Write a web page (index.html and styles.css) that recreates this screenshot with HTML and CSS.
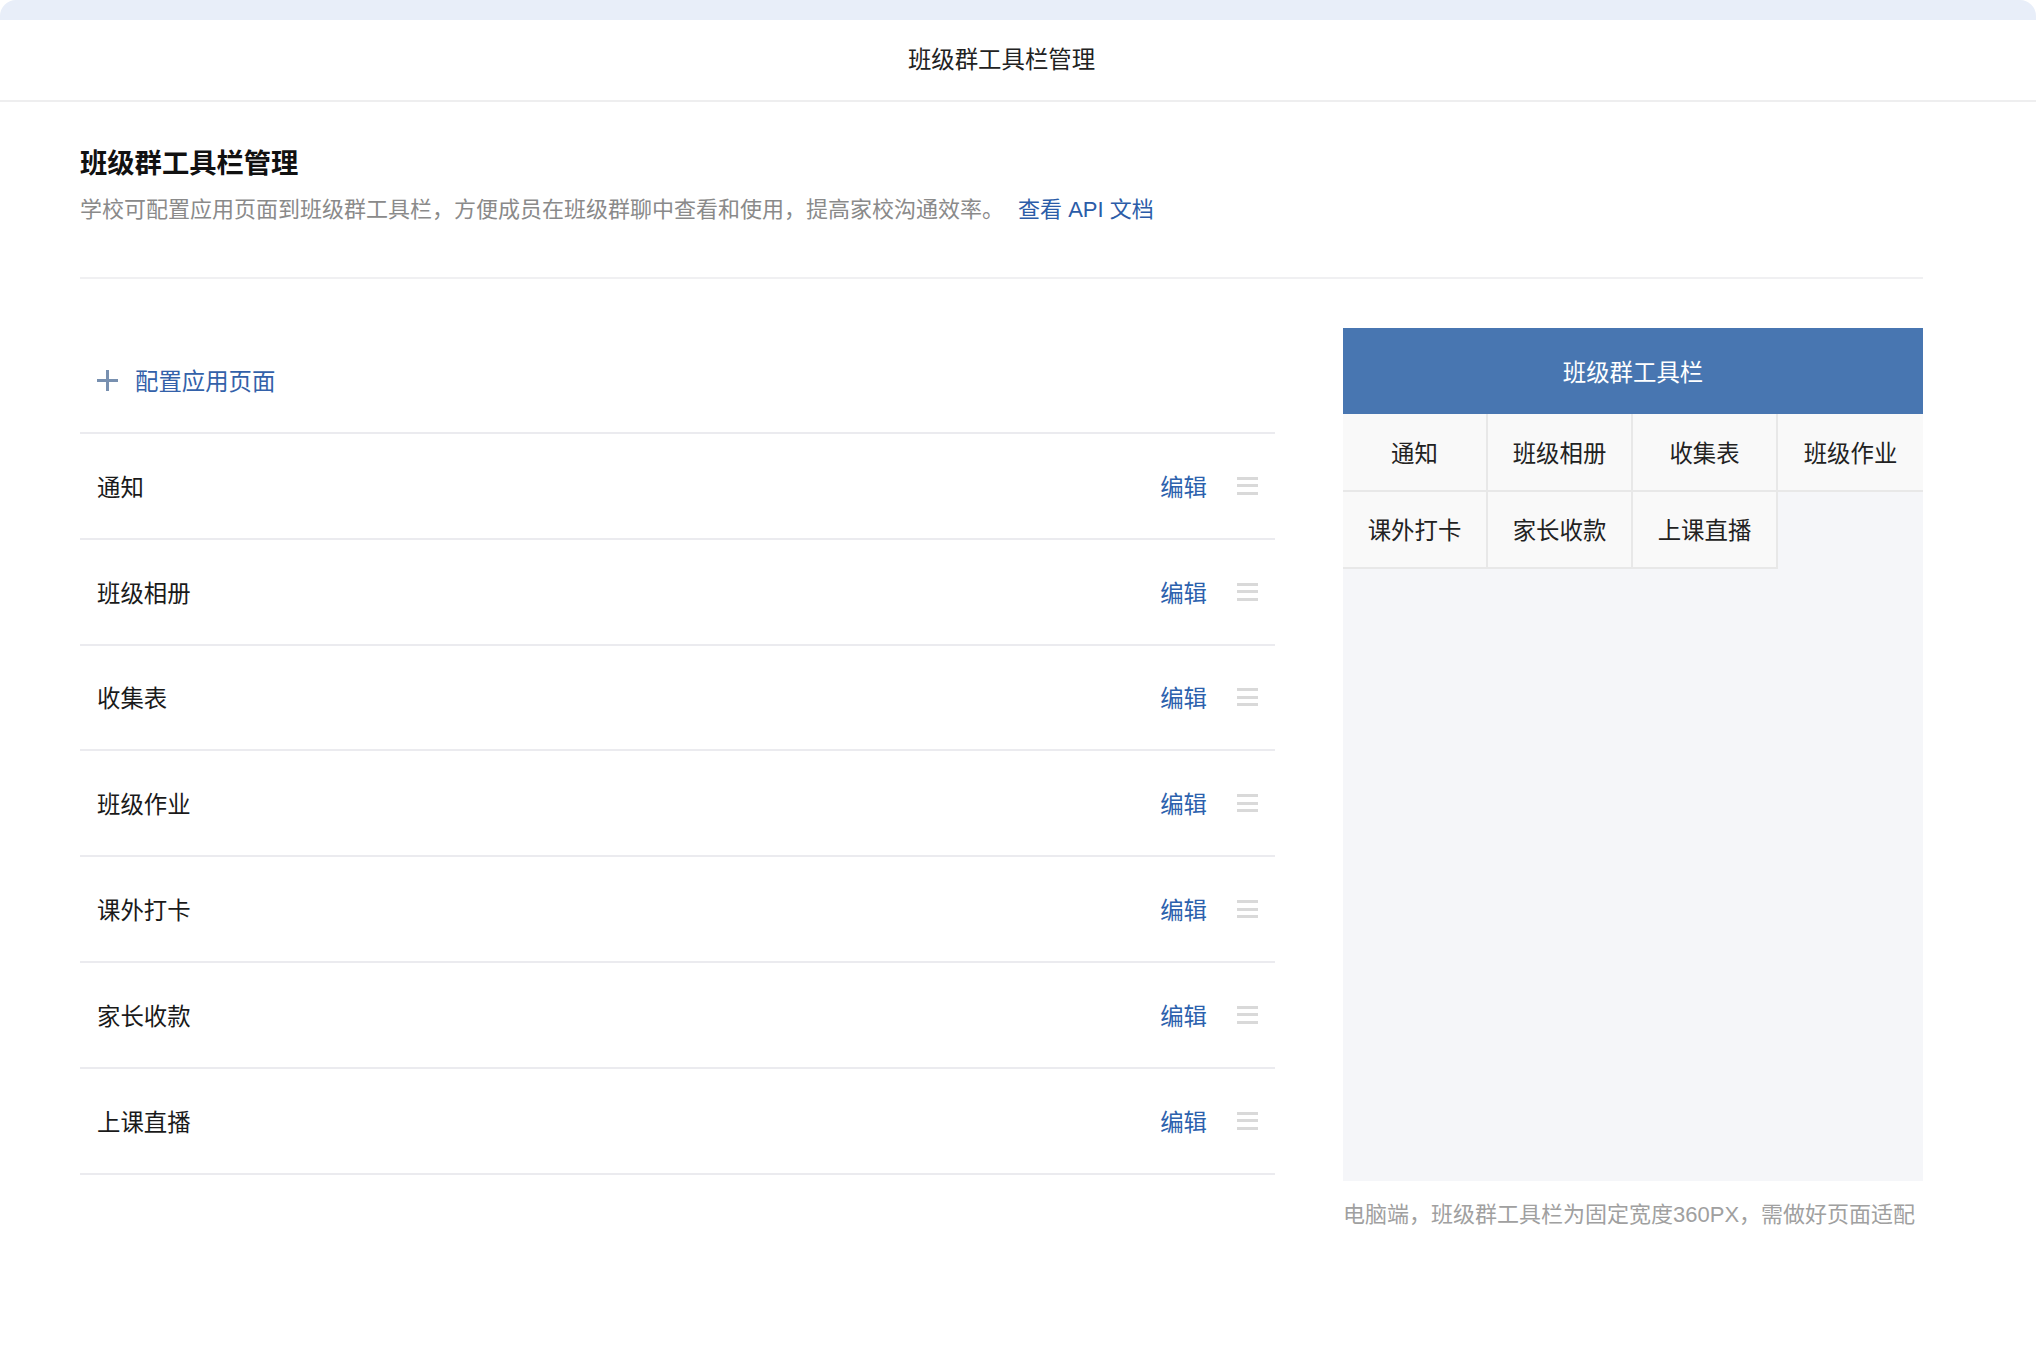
FILE: index.html
```html
<!DOCTYPE html>
<html lang="zh-CN">
<head>
    <meta charset="UTF-8">
    <meta name="viewport" content="width=device-width, initial-scale=1.0">
    <title>班级群工具栏管理</title>
    <link rel="stylesheet" href="styles.css">
</head>
<body>
    <!-- Window top band -->
    <div class="top-band"></div>

    <!-- Page bar -->
    <header class="page-bar">
        <span class="page-bar-title">班级群工具栏管理</span>
    </header>

    <main class="main">
        <section class="intro">
            <h1>班级群工具栏管理</h1>
            <p>学校可配置应用页面到班级群工具栏，方便成员在班级群聊中查看和使用，提高家校沟通效率。<a href="#" class="doc-link">查看 API 文档</a></p>
        </section>

        <div class="layout">
            <!-- App page list -->
            <div class="app-list">
                <div class="add-row">
                    <svg class="plus-icon" width="21" height="21" viewBox="0 0 21 21">
                        <rect x="9" y="0" width="3" height="21" fill="#7890b0"/>
                        <rect x="0" y="9" width="21" height="3" fill="#7890b0"/>
                    </svg>
                    <span>配置应用页面</span>
                </div>
                <ul class="items">
                    <li><span class="name">通知</span><a href="#" class="edit">编辑</a><span class="drag"><i></i><i></i><i></i></span></li>
                    <li><span class="name">班级相册</span><a href="#" class="edit">编辑</a><span class="drag"><i></i><i></i><i></i></span></li>
                    <li><span class="name">收集表</span><a href="#" class="edit">编辑</a><span class="drag"><i></i><i></i><i></i></span></li>
                    <li><span class="name">班级作业</span><a href="#" class="edit">编辑</a><span class="drag"><i></i><i></i><i></i></span></li>
                    <li><span class="name">课外打卡</span><a href="#" class="edit">编辑</a><span class="drag"><i></i><i></i><i></i></span></li>
                    <li><span class="name">家长收款</span><a href="#" class="edit">编辑</a><span class="drag"><i></i><i></i><i></i></span></li>
                    <li><span class="name">上课直播</span><a href="#" class="edit">编辑</a><span class="drag"><i></i><i></i><i></i></span></li>
                </ul>
            </div>

            <!-- Toolbar preview -->
            <aside class="preview">
                <div class="toolbar">
                    <div class="toolbar-title">班级群工具栏</div>
                    <div class="toolbar-grid">
                        <div class="cell">通知</div>
                        <div class="cell">班级相册</div>
                        <div class="cell">收集表</div>
                        <div class="cell">班级作业</div>
                        <div class="cell">课外打卡</div>
                        <div class="cell">家长收款</div>
                        <div class="cell">上课直播</div>
                    </div>
                </div>
                <p class="note">电脑端，班级群工具栏为固定宽度360PX，需做好页面适配</p>
            </aside>
        </div>
    </main>
</body>
</html>
```

FILE: styles.css
```css
* {
    margin: 0;
    padding: 0;
    box-sizing: border-box;
}

body {
    font-family: "Liberation Sans", "Noto Sans CJK SC", sans-serif;
    background-color: #ffffff;
    color: #1a1a1a;
    width: 2036px;
}

a {
    text-decoration: none;
}

/* Top band */
.top-band {
    height: 20px;
    background-color: #e8eef9;
    border-radius: 16px 16px 0 0;
}

/* Page bar */
.page-bar {
    height: 82px;
    border-bottom: 2px solid #eeeeef;
    display: flex;
    align-items: center;
    justify-content: center;
    padding-right: 33px;
}

.page-bar-title {
    font-size: 23.4px;
    line-height: 30px;
    color: #222;
}

/* Main area */
.main {
    padding: 0 113px 0 80px;
}

.intro {
    padding: 44px 0 52px;
    border-bottom: 2px solid #f0f0f2;
}

.intro h1 {
    font-size: 27.3px;
    line-height: 36px;
    font-weight: bold;
    color: #111;
}

.intro p {
    margin-top: 13px;
    font-size: 22px;
    line-height: 30px;
    color: #8a8a8a;
}

.doc-link {
    margin-left: 14px;
    color: #2b5ca8;
}

.layout {
    display: flex;
    margin-top: 49px;
    gap: 68px;
}

/* App list */
.app-list {
    flex: 1;
}

.add-row {
    height: 106px;
    display: flex;
    align-items: center;
    gap: 17px;
    padding-left: 17px;
    border-bottom: 2px solid #ebebef;
    font-size: 23.4px;
    color: #3361a9;
}

.items {
    list-style-type: none;
}

.items li {
    height: 105.8px;
    display: flex;
    align-items: center;
    padding: 0 17px;
    border-bottom: 2px solid #ebebef;
    font-size: 23.4px;
}

.items .name {
    flex: 1;
    color: #1a1a1a;
}

.items .edit {
    color: #2c61ad;
}

.drag {
    margin-left: 30px;
    width: 21px;
    display: flex;
    flex-direction: column;
    gap: 4.5px;
}

.drag i {
    display: block;
    height: 3px;
    background-color: #d9d9d9;
}

/* Preview panel */
.preview {
    width: 580px;
}

.toolbar {
    height: 853px;
    background-color: #f5f6f9;
}

.toolbar-title {
    height: 86px;
    display: flex;
    align-items: center;
    justify-content: center;
    background-color: #4876b1;
    color: #fff;
    font-size: 23.4px;
}

.toolbar-grid {
    display: grid;
    grid-template-columns: repeat(4, 1fr);
}

.cell {
    height: 77.5px;
    display: flex;
    align-items: center;
    justify-content: center;
    background-color: #f9f9f9;
    border-right: 2px solid #e8e8e8;
    border-bottom: 2px solid #e8e8e8;
    font-size: 23.4px;
    color: #222;
}

.cell:nth-child(4n) {
    border-right: none;
}

.note {
    margin-top: 19px;
    font-size: 22px;
    line-height: 30px;
    color: #a0a0a0;
}
```
